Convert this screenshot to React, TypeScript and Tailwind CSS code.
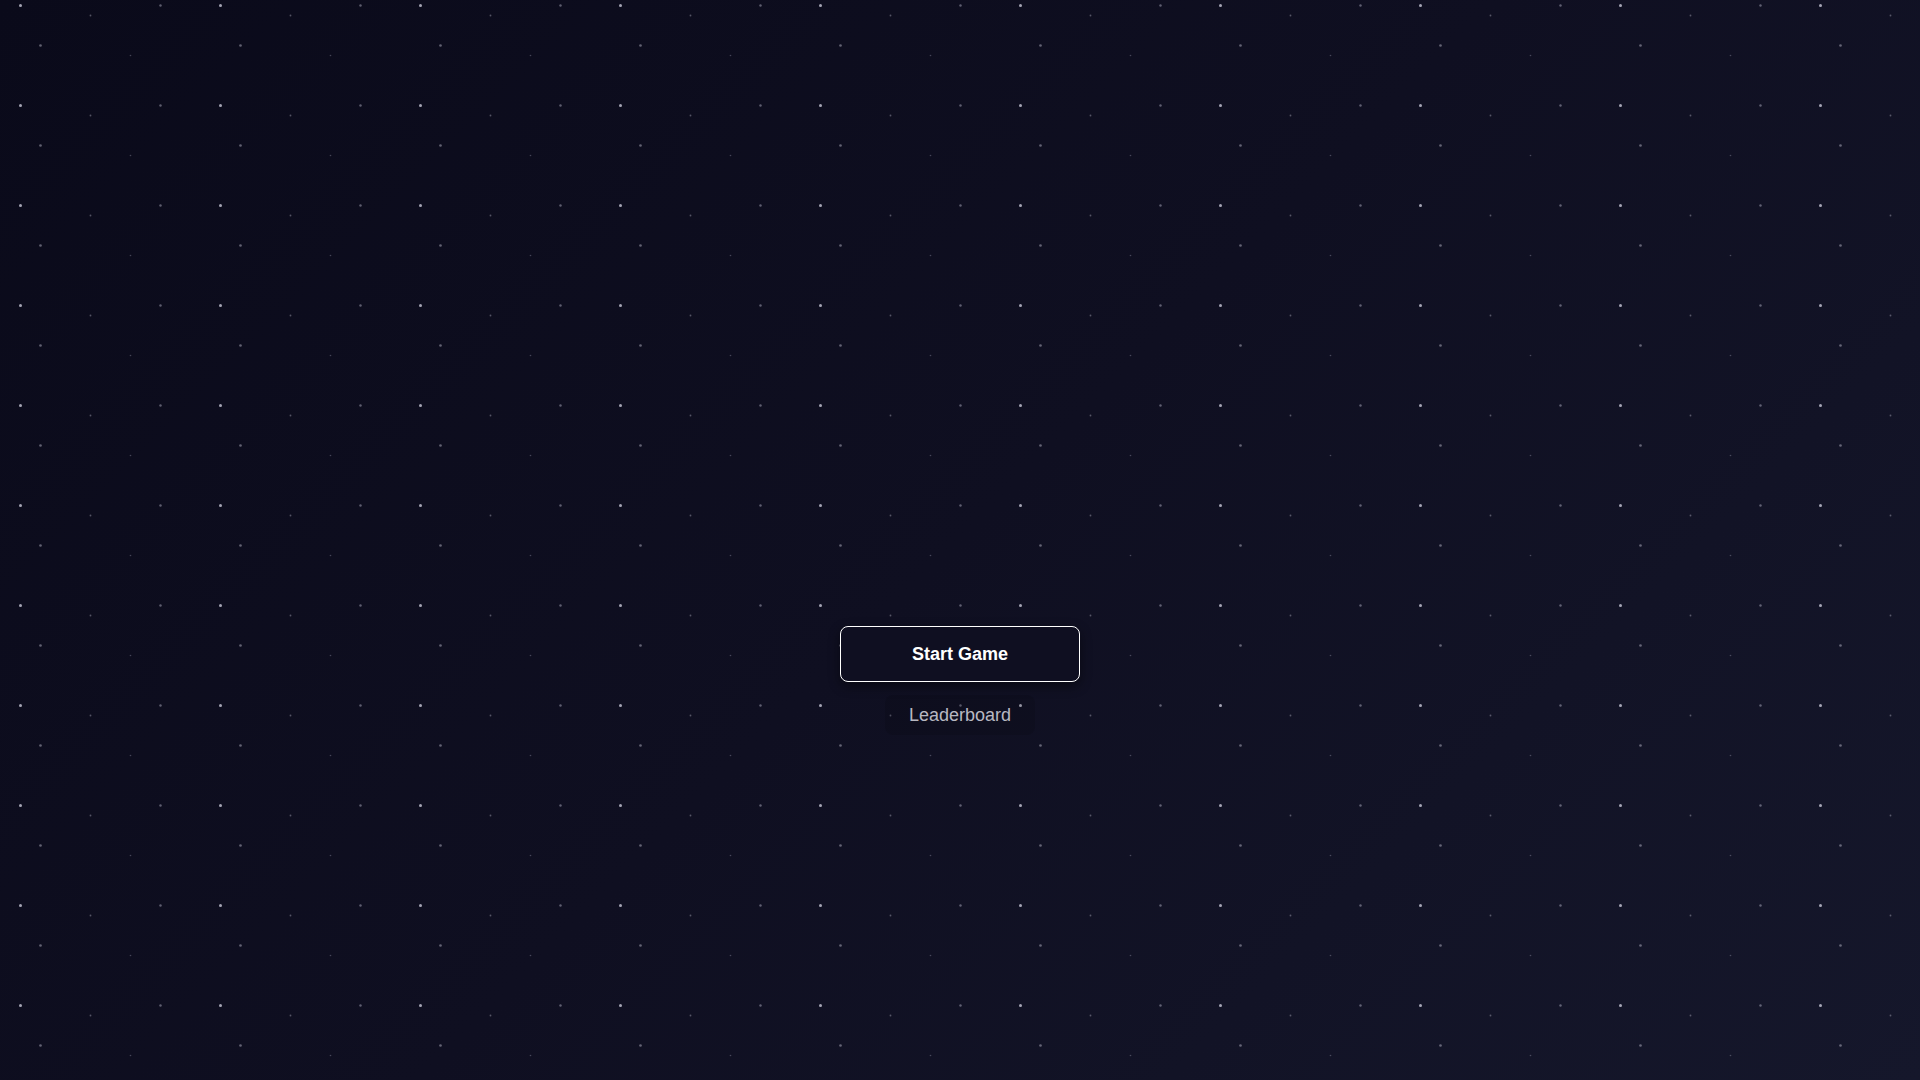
import React from "react";

function StarField() {
  return (
    <svg className="pointer-events-none absolute inset-0 h-full w-full" aria-hidden="true">
      <defs>
        <pattern id="stars" x="0" y="0" width="200" height="100" patternUnits="userSpaceOnUse">
          <circle cx="20.5" cy="5.5" r="1.5" fill="#e6e6f5" fillOpacity="0.7" />
          <circle cx="160.5" cy="5.5" r="1.2" fill="#d8d8ea" fillOpacity="0.4" />
          <circle cx="90.5" cy="15.5" r="0.9" fill="#d8d8ea" fillOpacity="0.35" />
          <circle cx="40.5" cy="45.5" r="1.3" fill="#d8d8ea" fillOpacity="0.42" />
          <circle cx="130.5" cy="55.5" r="0.8" fill="#d8d8ea" fillOpacity="0.28" />
        </pattern>
      </defs>
      <rect width="100%" height="100%" fill="url(#stars)" />
    </svg>
  );
}

export default function App() {
  return (
    <div className="relative h-screen w-full overflow-hidden bg-[linear-gradient(135deg,#0a0a1a_0%,#0f0f21_50%,#15172b_100%)] font-['Liberation_Sans',Arial,sans-serif]">
      <StarField />
      <div className="relative flex flex-col items-center gap-[13px] pt-[626px]">
        <button className="flex h-14 w-60 items-center justify-center rounded-lg border-[1.5px] border-white bg-[#0f0f21] text-lg font-bold text-white shadow-[0_4px_12px_rgba(0,0,0,0.45)]">
          Start Game
        </button>
        <button className="rounded-lg bg-black/10 px-6 py-1.5 text-lg leading-7 text-[#b8b8c2]">
          Leaderboard
        </button>
      </div>
    </div>
  );
}
